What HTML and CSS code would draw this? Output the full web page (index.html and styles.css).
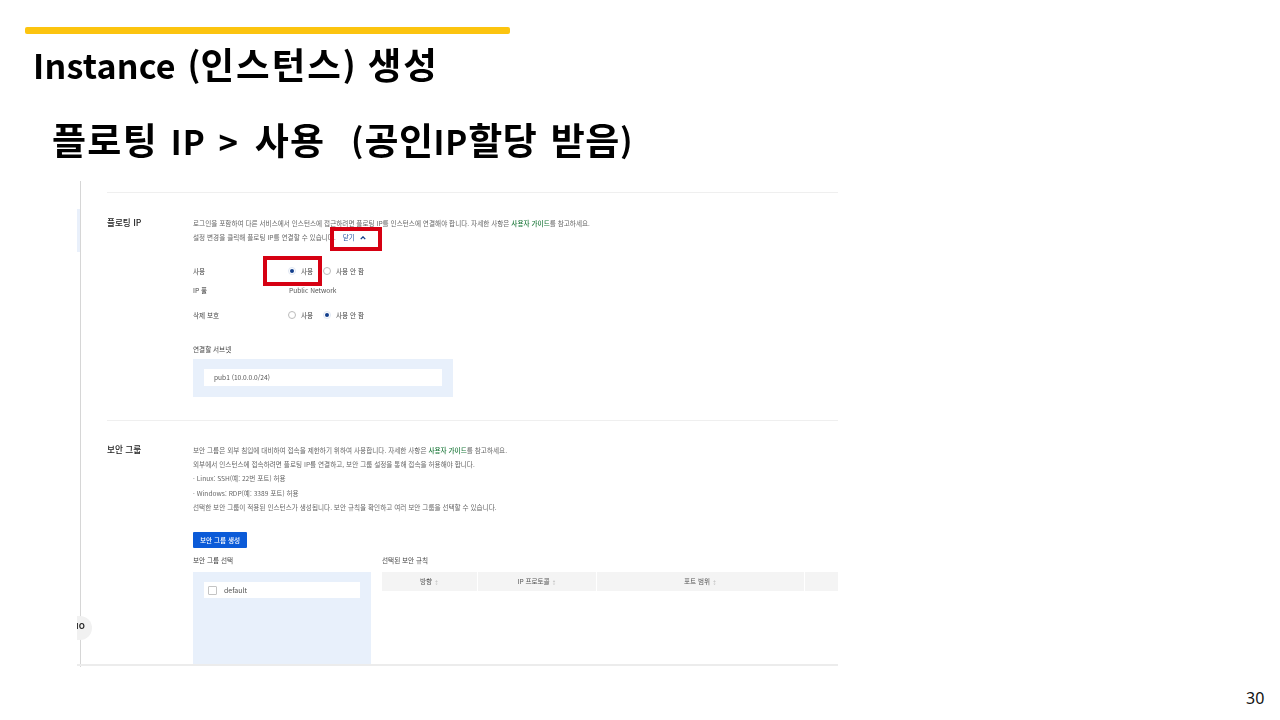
FILE: index.html
```html
<!DOCTYPE html>
<html lang="ko">
<head>
<meta charset="utf-8">
<title>Instance 생성</title>
<link rel="stylesheet" href="styles.css">
</head>
<body>
<main class="slide">
  <div class="accent-bar"></div>
  <h1 class="title">Instance (<span class="ko">인스턴스</span>) <span class="ko">생성</span></h1>
  <h2 class="subtitle"><span class="ko wide">플로팅</span> IP &gt; <span class="ko wide lead">사용</span> &nbsp;(<span class="ko tight">공인</span>IP<span class="ko tight">할당 받음</span>)</h2>
  <section class="shot">
    <div class="rail-mark"></div>
    <div class="content">
      <section class="section floating">
        <h3 class="section-name">플로팅 IP</h3>
        <div class="section-body">
          <p class="desc">로그인을 포함하여 다른 서비스에서 인스턴스에 접근하려면 플로팅 IP를 인스턴스에 연결해야 합니다. 자세한 사항은 <span class="link">사용자 가이드</span>를 참고하세요.</p>
          <p class="desc">설정 변경을 클릭해 플로팅 IP를 연결할 수 있습니다. <span class="close">닫기 <svg class="chev" viewBox="0 0 8 5"><path d="M1 4l3-3 3 3" fill="none" stroke="#123e8c" stroke-width="1.8"/></svg></span></p>
          <div class="form-row row-use">
            <span class="form-label">사용</span>
            <span class="radio on"></span><span class="opt">사용</span>
            <span class="radio"></span><span class="opt">사용 안 함</span>
          </div>
          <div class="form-row row-pool">
            <span class="form-label">IP 풀</span>
            <span class="plain">Public Network</span>
          </div>
          <div class="form-row row-del">
            <span class="form-label">삭제 보호</span>
            <span class="radio"></span><span class="opt">사용</span>
            <span class="radio on"></span><span class="opt">사용 안 함</span>
          </div>
          <p class="field-label subnet-label">연결할 서브넷</p>
          <div class="pick-box subnet-box"><div class="pick-item">pub1 (10.0.0.0/24)</div></div>
        </div>
      </section>
      <section class="section security">
        <h3 class="section-name">보안 그룹</h3>
        <div class="section-body">
          <p class="desc">보안 그룹은 외부 침입에 대비하여 접속을 제한하기 위하여 사용합니다. 자세한 사항은 <span class="link">사용자 가이드</span>를 참고하세요.</p>
          <p class="desc">외부에서 인스턴스에 접속하려면 플로팅 IP를 연결하고, 보안 그룹 설정을 통해 접속을 허용해야 합니다.</p>
          <p class="desc">· Linux: SSH(예: 22번 포트) 허용</p>
          <p class="desc">· Windows: RDP(예: 3389 포트) 허용</p>
          <p class="desc">선택한 보안 그룹이 적용된 인스턴스가 생성됩니다. 보안 규칙을 확인하고 여러 보안 그룹을 선택할 수 있습니다.</p>
          <div class="btn">보안 그룹 생성</div>
          <div class="pick-grid">
            <div>
              <p class="field-label">보안 그룹 선택</p>
              <div class="pick-box group-box">
                <div class="pick-item group-item"><span class="check"></span>default</div>
              </div>
            </div>
            <div>
              <p class="field-label">선택된 보안 규칙</p>
              <div class="rules">
                <div class="th">방향 <i>↕</i></div>
                <div class="th">IP 프로토콜 <i>↕</i></div>
                <div class="th">포트 범위 <i>↕</i></div>
                <div class="th"></div>
              </div>
            </div>
          </div>
        </div>
      </section>
    </div>
    <div class="fab">IO</div>
    <div class="callout callout-close"></div>
    <div class="callout callout-use"></div>
  </section>
  <div class="page-no">30</div>
</main>
</body>
</html>
```

FILE: styles.css
```css
* { box-sizing: border-box; margin: 0; padding: 0; }
html, body { width: 1280px; height: 720px; overflow: hidden; background: #fff; }
body { font-family: "Noto Sans CJK KR", "Noto Sans", sans-serif; color: #000; }
.slide { position: relative; width: 1280px; height: 720px; background: #fff; }

.accent-bar { position: absolute; left: 25px; top: 27px; width: 485px; height: 7px; border-radius: 2px; background: #fcc40f; }
.title { position: absolute; left: 33px; top: 37px; font-size: 34px; line-height: 54px; font-weight: 700; white-space: nowrap; letter-spacing: 0.2px; word-spacing: 2px; filter: blur(0.3px); }
.title .ko { font-size: 36.5px; letter-spacing: 2px; }
.subtitle { position: absolute; left: 52px; top: 112px; font-size: 33px; line-height: 54px; font-weight: 700; white-space: nowrap; letter-spacing: 0.9px; word-spacing: 2.7px; filter: blur(0.3px); }
.subtitle .ko { font-size: 37px; }
.subtitle .wide { letter-spacing: 1.3px; }
.subtitle .lead { margin-left: 3px; }
.subtitle .tight { letter-spacing: 0.5px; }
.page-no { position: absolute; left: 1246px; top: 687px; font-size: 16px; line-height: 22px; font-family: "Noto Sans", sans-serif; color: #111; }

.shot { position: absolute; left: 77px; top: 181px; width: 761px; height: 486px; overflow: hidden; background: #fff; filter: blur(0.45px); }
.shot::before { content: ""; position: absolute; left: 3px; top: 0; bottom: 0; width: 1px; background: #d6d6d6; }
.shot::after { content: ""; position: absolute; left: 0; right: 0; bottom: 1px; height: 2px; background: #ececec; }
.rail-mark { position: absolute; left: 0; top: 28px; width: 3px; height: 43px; background: #e9f0fb; }

.content { margin-left: 30px; padding-top: 11px; }
.section { display: grid; grid-template-columns: 86px 1fr; border-top: 1px solid #efefef; }
.floating { height: 228px; padding-top: 23px; }
.security { padding-top: 22px; }
.section-name { margin-top: -1px; font-size: 8.6px; line-height: 14px; font-weight: 500; color: #222; }

.desc { font-size: 6.6px; line-height: 14.2px; color: #666; white-space: nowrap; letter-spacing: 0.02px; }
.link { color: #1f7a3d; font-weight: 500; }
.close { color: #1d4d9e; margin-left: 5px; }
.chev { width: 6px; height: 4px; margin-left: 3px; }

.form-row { display: flex; align-items: center; height: 14px; font-size: 6.6px; color: #444; }
.row-use { margin-top: 20px; }
.row-pool { margin-top: 5px; }
.row-del { margin-top: 11px; }
.form-label { width: 95px; }
.radio { width: 8px; height: 8px; margin-right: 5px; border: 1px solid #bbb; border-radius: 50%; background: #fff; display: flex; align-items: center; justify-content: center; }
.radio.on { border-color: #dfe6f2; }
.radio.on::before { content: ""; width: 4px; height: 4px; border-radius: 50%; background: #123e8c; }
.opt { width: 22px; white-space: nowrap; }
.plain { margin-left: 1px; color: #555; font-size: 6.6px; }

.field-label { font-size: 6.6px; line-height: 10px; color: #444; white-space: nowrap; }
.subnet-label { margin-top: 22px; }
.pick-box { background: #e8f0fb; padding: 10px 11px; }
.subnet-box { width: 260px; height: 38px; margin-top: 5px; }
.pick-item { height: 17px; padding-left: 10px; background: #fff; font-size: 6.6px; line-height: 17px; color: #555; }
.btn { width: 54px; height: 16px; margin-top: 18px; border-radius: 1px; background: #0b5bd8; color: #fff; font-size: 6.6px; font-weight: 500; line-height: 16px; text-align: center; white-space: nowrap; }

.pick-grid { display: grid; grid-template-columns: 178px 456px; column-gap: 11px; margin-top: 7px; }
.group-box { height: 93px; margin-top: 7px; }
.group-item { display: flex; align-items: center; height: 16px; padding-left: 4px; font-size: 7px; }
.check { width: 9px; height: 9px; margin-right: 7px; border: 1px solid #c4c4c4; border-radius: 1px; background: #fff; }
.rules { display: grid; grid-template-columns: 95px 118px 207px 33px; column-gap: 1px; margin-top: 7px; height: 19px; }
.th { background: #f4f4f4; font-size: 6.6px; line-height: 19px; text-align: center; color: #555; white-space: nowrap; }
.th i { font-style: normal; font-size: 5px; color: #bbb; }

.fab { position: absolute; left: 0; top: 435px; width: 15px; height: 24px; border-radius: 0 12px 12px 0; background: #f1f1f1; font-size: 8px; line-height: 20px; font-weight: 700; color: #222; overflow: hidden; text-indent: -1px; }
.callout { position: absolute; border: 4px solid #d60012; }
.callout-close { left: 253px; top: 46px; width: 52px; height: 24px; }
.callout-use { left: 186px; top: 75px; width: 59px; height: 30px; }
```
